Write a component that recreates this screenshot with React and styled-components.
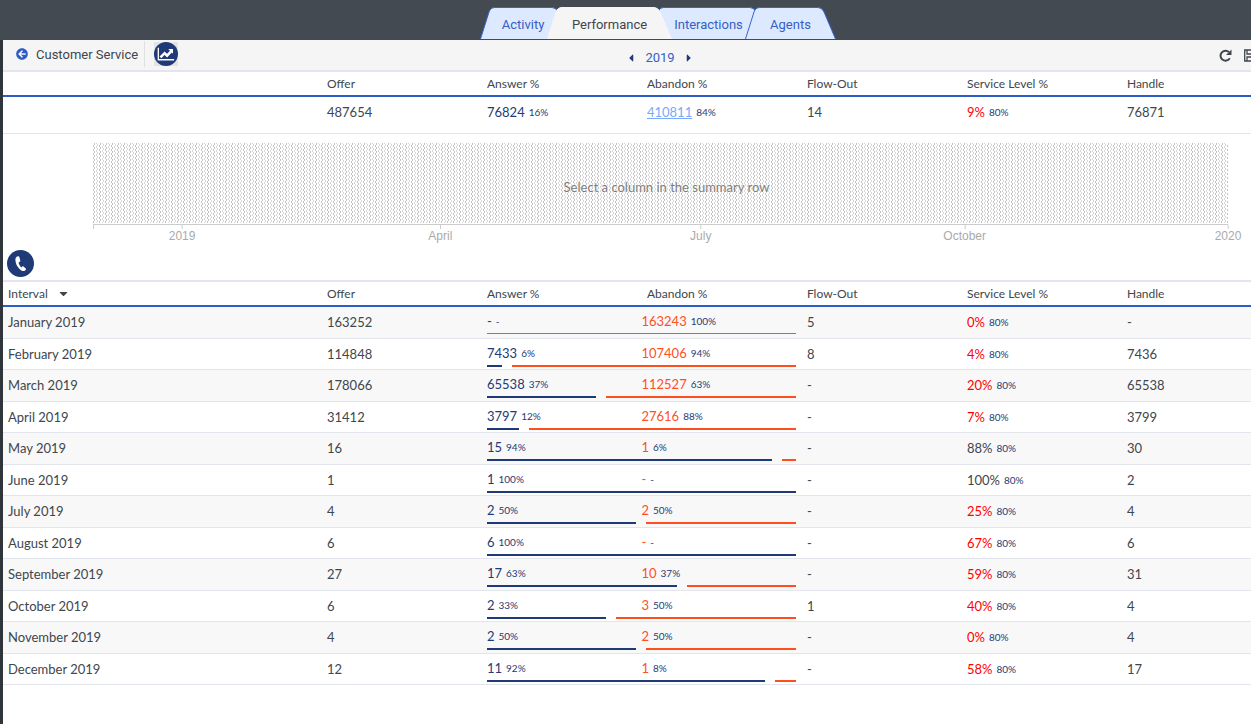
import React, { useState } from 'react';
import styled, { createGlobalStyle } from 'styled-components';
import { FaArrowCircleLeft, FaCaretLeft, FaCaretRight, FaCaretDown } from 'react-icons/fa';

const GlobalStyle = createGlobalStyle`
  * {
    box-sizing: border-box;
  }

  body {
    margin: 0;
    background: #fff;
    color: #40464d;
    font-family: Lato, sans-serif;
    font-size: 13px;
    overflow-x: hidden;
  }

  button {
    border: 0;
    padding: 0;
    background: none;
    font: inherit;
    color: inherit;
    cursor: pointer;
  }
`;

const Page = styled.div`
  min-height: 100vh;
  border-left: 3px solid #30353c;
`;

const TopBar = styled.header`
  display: flex;
  justify-content: center;
  height: 40px;
  padding: 7px 0 1px;
  background: #444a51;
  margin-left: -3px;
  padding-left: 65px;
`;

const TabList = styled.nav`
  display: flex;
`;

const Tab = styled.button`
  position: relative;
  z-index: ${({ $active }) => ($active ? 2 : 1)};
  width: ${({ $width }) => $width}px;
  height: 32px;
  margin-right: -23px;
  padding-top: 3px;
  font-family: Roboto, sans-serif;
  font-size: 13px;
  color: ${({ $active }) => ($active ? '#40464d' : '#3560c5')};

  &:first-child {
    padding-right: 4px;
  }

  &:last-child {
    margin-right: 0;
  }
`;

const TabShape = styled.svg`
  position: absolute;
  inset: 0;
  z-index: -1;
`;

const Toolbar = styled.div`
  display: grid;
  grid-template-columns: 1fr auto 1fr;
  align-items: center;
  height: 32px;
  background: #f5f5f5;
  border-bottom: 2px solid #e2e6ec;
  font-family: Roboto, sans-serif;
  font-size: 13px;
`;

const ToolbarLeft = styled.div`
  display: flex;
  align-items: center;
  padding-bottom: 2px;
`;

const Back = styled.a`
  display: flex;
  align-items: center;
  gap: 8px;
  height: 26px;
  padding: 0 6px 0 13px;
  border-right: 1px solid #e0e0e0;
  color: #40464d;
  text-decoration: none;

  svg {
    color: #2c5cc5;
  }
`;

const ChartButton = styled.button`
  display: flex;
  margin-left: 9px;
  background: #e4e4e4;
`;

const Period = styled.div`
  display: flex;
  align-items: center;
  gap: 8px;
  padding: 5px 0 0 66px;
  color: #3560c5;

  button {
    display: flex;
    color: #1f3a76;
  }
`;

const ToolbarRight = styled.div`
  display: flex;
  justify-content: flex-end;
  gap: 12px;
  margin-right: -5px;

  button {
    display: flex;
  }
`;

const Table = styled.table`
  width: 100%;
  table-layout: fixed;
  border-collapse: separate;
  border-spacing: 0;
`;

const FirstCol = styled.col`
  width: 25.56%;
`;

const ValueCol = styled.col`
  width: 12.82%;
`;

const HeadCell = styled.th`
  height: 25px;
  padding: 0 5px;
  border-bottom: 2px solid #2c5cc5;
  font-size: 12px;
  font-weight: 400;
  text-align: left;

  button {
    display: flex;
    align-items: center;
    gap: 9px;
  }
`;

const SummaryCell = styled.td`
  height: 37px;
  padding: 0 5px 6px;
  border-bottom: 1px solid #e4e4e4;
  color: ${({ $blue }) => ($blue ? '#1f3a76' : 'inherit')};
`;

const SummaryLink = styled.a`
  color: #77aaf9;
`;

const Small = styled.small`
  margin-left: 4px;
  font-size: 10px;
  color: #1f3a76;
  vertical-align: 1px;
`;

const Level = styled.span`
  color: ${({ $low }) => ($low ? '#f00' : 'inherit')};
`;

const ChartArea = styled.section`
  padding: 9px 23px 0 90px;
`;

const Plot = styled.div`
  position: relative;
  height: 80px;
`;

const Hatch = styled.svg`
  display: block;
  width: 100%;
  height: 80px;
`;

const Hint = styled.p`
  position: absolute;
  inset: 0;
  display: flex;
  align-items: center;
  justify-content: center;
  margin: 0;
  padding: 8px 0 0 12px;
  font-size: 13px;
  color: #7c7c7c;
  text-shadow: 0 0 2px #fff, 0 0 2px #fff;
`;

const Axis = styled.div`
  position: relative;
  height: 23px;
  margin-top: 1px;
  border-top: 1px solid #ccc;

  &::before {
    content: '';
    position: absolute;
    left: 0;
    height: 4px;
    border-left: 1px solid #ccc;
  }
`;

const Tick = styled.span`
  position: absolute;
  display: flex;
  flex-direction: column;
  align-items: center;
  transform: translateX(-50%);
  font-family: 'Liberation Sans', Arial, sans-serif;
  font-size: 12px;
  line-height: 14px;
  color: #aaa;

  &::before {
    content: '';
    height: 4px;
    border-left: 1px solid #ccc;
  }
`;

const ChannelBar = styled.div`
  display: flex;
  padding: 3px 4px;
  border-bottom: 2px solid #e2e6ec;

  button {
    display: flex;
  }
`;

const Row = styled.tr`
  height: 31px;

  &:nth-child(odd) {
    height: 32px;
    background: #f8f8f8;
  }
`;

const Cell = styled.td`
  padding: 0 5px 1px;
  border-bottom: 1px solid #e2e6ec;
`;

const SplitCell = styled(Cell)`
  padding: 0 6px 0 5px;
  vertical-align: top;
`;

const Split = styled.div`
  display: grid;
  grid-template-columns: 1fr 1fr;
  height: 26px;
  padding-top: 6px;
  line-height: 16px;
`;

const Answered = styled.span`
  color: #1f3a76;
`;

const Abandoned = styled.span`
  color: #ff4f1f;
`;

const Bars = styled.div`
  display: flex;
  height: ${({ $thin }) => ($thin ? 1 : 2)}px;
`;

const Share = styled.div`
  background: ${({ $color }) => $color};
  background-clip: content-box;
  padding-right: ${({ $before }) => ($before ? 5 : 0)}px;
  padding-left: ${({ $after }) => ($after ? 5 : 0)}px;
`;

const tabs = [
  { name: 'Activity', width: 90 },
  { name: 'Performance', width: 125 },
  { name: 'Interactions', width: 119 },
  { name: 'Agents', width: 91 },
];

const ticks = [
  { label: '2019', at: 7.85 },
  { label: 'April', at: 30.6 },
  { label: 'July', at: 53.55 },
  { label: 'October', at: 76.8 },
  { label: '2020', at: 100 },
];

const months = [
  { month: 'January', offer: 163252, answer: 0, abandon: 163243, abandonPct: 100, flow: 5, level: 0 },
  { month: 'February', offer: 114848, answer: 7433, answerPct: 6, abandon: 107406, abandonPct: 94, flow: 8, level: 4, handle: 7436 },
  { month: 'March', offer: 178066, answer: 65538, answerPct: 37, abandon: 112527, abandonPct: 63, level: 20, handle: 65538 },
  { month: 'April', offer: 31412, answer: 3797, answerPct: 12, abandon: 27616, abandonPct: 88, level: 7, handle: 3799 },
  { month: 'May', offer: 16, answer: 15, answerPct: 94, abandon: 1, abandonPct: 6, level: 88, handle: 30 },
  { month: 'June', offer: 1, answer: 1, answerPct: 100, abandon: 0, level: 100, handle: 2 },
  { month: 'July', offer: 4, answer: 2, answerPct: 50, abandon: 2, abandonPct: 50, level: 25, handle: 4 },
  { month: 'August', offer: 6, answer: 6, answerPct: 100, abandon: 0, level: 67, handle: 6 },
  { month: 'September', offer: 27, answer: 17, answerPct: 63, abandon: 10, abandonPct: 37, level: 59, handle: 31 },
  { month: 'October', offer: 6, answer: 2, answerPct: 33, abandon: 3, abandonPct: 50, flow: 1, level: 40, handle: 4 },
  { month: 'November', offer: 4, answer: 2, answerPct: 50, abandon: 2, abandonPct: 50, level: 0, handle: 4 },
  { month: 'December', offer: 12, answer: 11, answerPct: 92, abandon: 1, abandonPct: 8, level: 58, handle: 17 },
];

const columns = ['Offer', 'Answer %', 'Abandon %', 'Flow-Out', 'Service Level %', 'Handle'];

const tabPath = (w) =>
  `M0.5 32 L9 5 Q10.5 0.5 15 0.5 H${w - 18} Q${w - 14} 0.5 ${w - 12} 5 L${w - 0.5} 32`;

const Columns = () => (
  <colgroup>
    <FirstCol />
    {columns.slice(1).map((name) => (
      <ValueCol key={name} />
    ))}
    <col />
  </colgroup>
);

const Percent = ({ value, children }) => (
  <>
    {value || '-'}
    <Small>{value ? `${children}%` : '-'}</Small>
  </>
);

const TrendIcon = () => (
  <svg width="24" height="24" viewBox="0 0 25 25" aria-hidden="true">
    <circle cx="12.5" cy="12.5" r="12.5" fill="#1f3a76" />
    <path d="M4.500 6v12.500H21" fill="none" stroke="#fff" strokeWidth="1.4" />
    <path d="M6.700 16l4.300-4.300 2.600 2.600 4.500-4.800" fill="none" stroke="#fff" strokeWidth="2.600" />
    <path d="M14.800 7.300H19.800v5z" fill="#fff" />
  </svg>
);

const PhoneIcon = () => (
  <svg width="27" height="27" viewBox="0 0 27 27" aria-hidden="true">
    <circle cx="13.500" cy="13.500" r="13.500" fill="#1f3a76" />
    <path
      d="M10.800 6.300c-1.700.5-2.600 1.900-2.400 4 .4 4.300 2.800 8.400 6.400 10.400 1.400.8 3.200.3 4.100-1.300.2-.4.1-.7-.2-1l-2.200-1.900c-.4-.3-.8-.3-1.100 0l-1 .9c-1.400-1.300-2.400-3.100-2.800-5l1.200-.6c.4-.2.6-.5.500-1l-.9-3.800c-.2-.6-.8-.9-1.600-.7z"
      fill="#fff"
    />
  </svg>
);

const RefreshIcon = () => (
  <svg width="13" height="13" viewBox="0 0 13 13" aria-hidden="true">
    <path d="M10.800 9.300A5 5 0 1 1 9.900 3" fill="none" stroke="#40464d" strokeWidth="2" />
    <path d="M12.500.5v5.500H7z" fill="#40464d" />
  </svg>
);

const SaveIcon = () => (
  <svg width="12" height="13" viewBox="0 0 12 13" aria-hidden="true">
    <path d="M.7 1h8.300l2.300 2.300V12H.7zM3 1v4h5V1M3 12V8h6v4" fill="none" stroke="#40464d" strokeWidth="1.300" />
  </svg>
);

const App = () => {
  const [active, setActive] = useState('Performance');

  return (
    <>
      <GlobalStyle />
      <Page>
        <TopBar>
          <TabList>
            {tabs.map(({ name, width }) => (
              <Tab key={name} $width={width} $active={active === name} onClick={() => setActive(name)}>
                <TabShape width={width} height="32" aria-hidden="true">
                  <path
                    d={tabPath(width)}
                    fill={active === name ? '#f5f5f5' : '#dde9ff'}
                    stroke={active === name ? '#f5f5f5' : '#3366cc'}
                  />
                </TabShape>
                {name}
              </Tab>
            ))}
          </TabList>
        </TopBar>

        <Toolbar>
          <ToolbarLeft>
            <Back href="#customer-service">
              <FaArrowCircleLeft size={12} />
              Customer Service
            </Back>
            <ChartButton aria-label="Chart">
              <TrendIcon />
            </ChartButton>
          </ToolbarLeft>
          <Period>
            <button aria-label="Previous year"><FaCaretLeft size={12} /></button>
            2019
            <button aria-label="Next year"><FaCaretRight size={12} /></button>
          </Period>
          <ToolbarRight>
            <button aria-label="Refresh"><RefreshIcon /></button>
            <button aria-label="Save"><SaveIcon /></button>
          </ToolbarRight>
        </Toolbar>

        <Table>
          <Columns />
          <thead>
            <tr>
              <HeadCell />
              {columns.map((name) => (
                <HeadCell key={name}>{name}</HeadCell>
              ))}
            </tr>
          </thead>
          <tbody>
            <tr>
              <SummaryCell />
              <SummaryCell>487654</SummaryCell>
              <SummaryCell $blue>76824<Small>16%</Small></SummaryCell>
              <SummaryCell><SummaryLink href="#abandon">410811</SummaryLink><Small>84%</Small></SummaryCell>
              <SummaryCell>14</SummaryCell>
              <SummaryCell><Level $low>9%</Level><Small>80%</Small></SummaryCell>
              <SummaryCell>76871</SummaryCell>
            </tr>
          </tbody>
        </Table>

        <ChartArea>
          <Plot>
            <Hatch aria-hidden="true">
              <defs>
                <pattern id="hatch" width="6" height="4" patternUnits="userSpaceOnUse">
                  <path d="M0 2h1v2H0zM1 0h1v2H1z" fill="#c4c4c4" />
                  <path d="M3 3h1v1H3zM3 0h1v1H3zM4 1h1v2H4z" fill="#d8d8d8" />
                </pattern>
              </defs>
              <rect width="100%" height="80" fill="url(#hatch)" />
            </Hatch>
            <Hint>Select a column in the summary row</Hint>
          </Plot>
          <Axis>
            {ticks.map(({ label, at }) => (
              <Tick key={label} style={{ left: `${at}%` }}>{label}</Tick>
            ))}
          </Axis>
        </ChartArea>

        <ChannelBar>
          <button aria-label="Calls"><PhoneIcon /></button>
        </ChannelBar>

        <Table>
          <Columns />
          <thead>
            <tr>
              <HeadCell>
                <button>Interval <FaCaretDown size={13} /></button>
              </HeadCell>
              {columns.map((name) => (
                <HeadCell key={name}>{name}</HeadCell>
              ))}
            </tr>
          </thead>
          <tbody>
            {months.map((m) => {
              const share = (m.answer / (m.answer + m.abandon)) * 100;
              const both = m.answer > 0 && m.abandon > 0;
              return (
                <Row key={m.month}>
                  <Cell>{m.month} 2019</Cell>
                  <Cell>{m.offer}</Cell>
                  <SplitCell colSpan={2}>
                    <Split>
                      <Answered><Percent value={m.answer}>{m.answerPct}</Percent></Answered>
                      <Abandoned><Percent value={m.abandon}>{m.abandonPct}</Percent></Abandoned>
                    </Split>
                    <Bars $thin={m.answer === 0}>
                      <Share $color="#1f3a76" $before={both} style={{ width: `${share}%` }} />
                      <Share $color="#ff4f1f" $after={both} style={{ width: `${100 - share}%` }} />
                    </Bars>
                  </SplitCell>
                  <Cell>{m.flow || '-'}</Cell>
                  <Cell><Level $low={m.level < 80}>{m.level}%</Level><Small>80%</Small></Cell>
                  <Cell>{m.handle || '-'}</Cell>
                </Row>
              );
            })}
          </tbody>
        </Table>
      </Page>
    </>
  );
};

export default App;
